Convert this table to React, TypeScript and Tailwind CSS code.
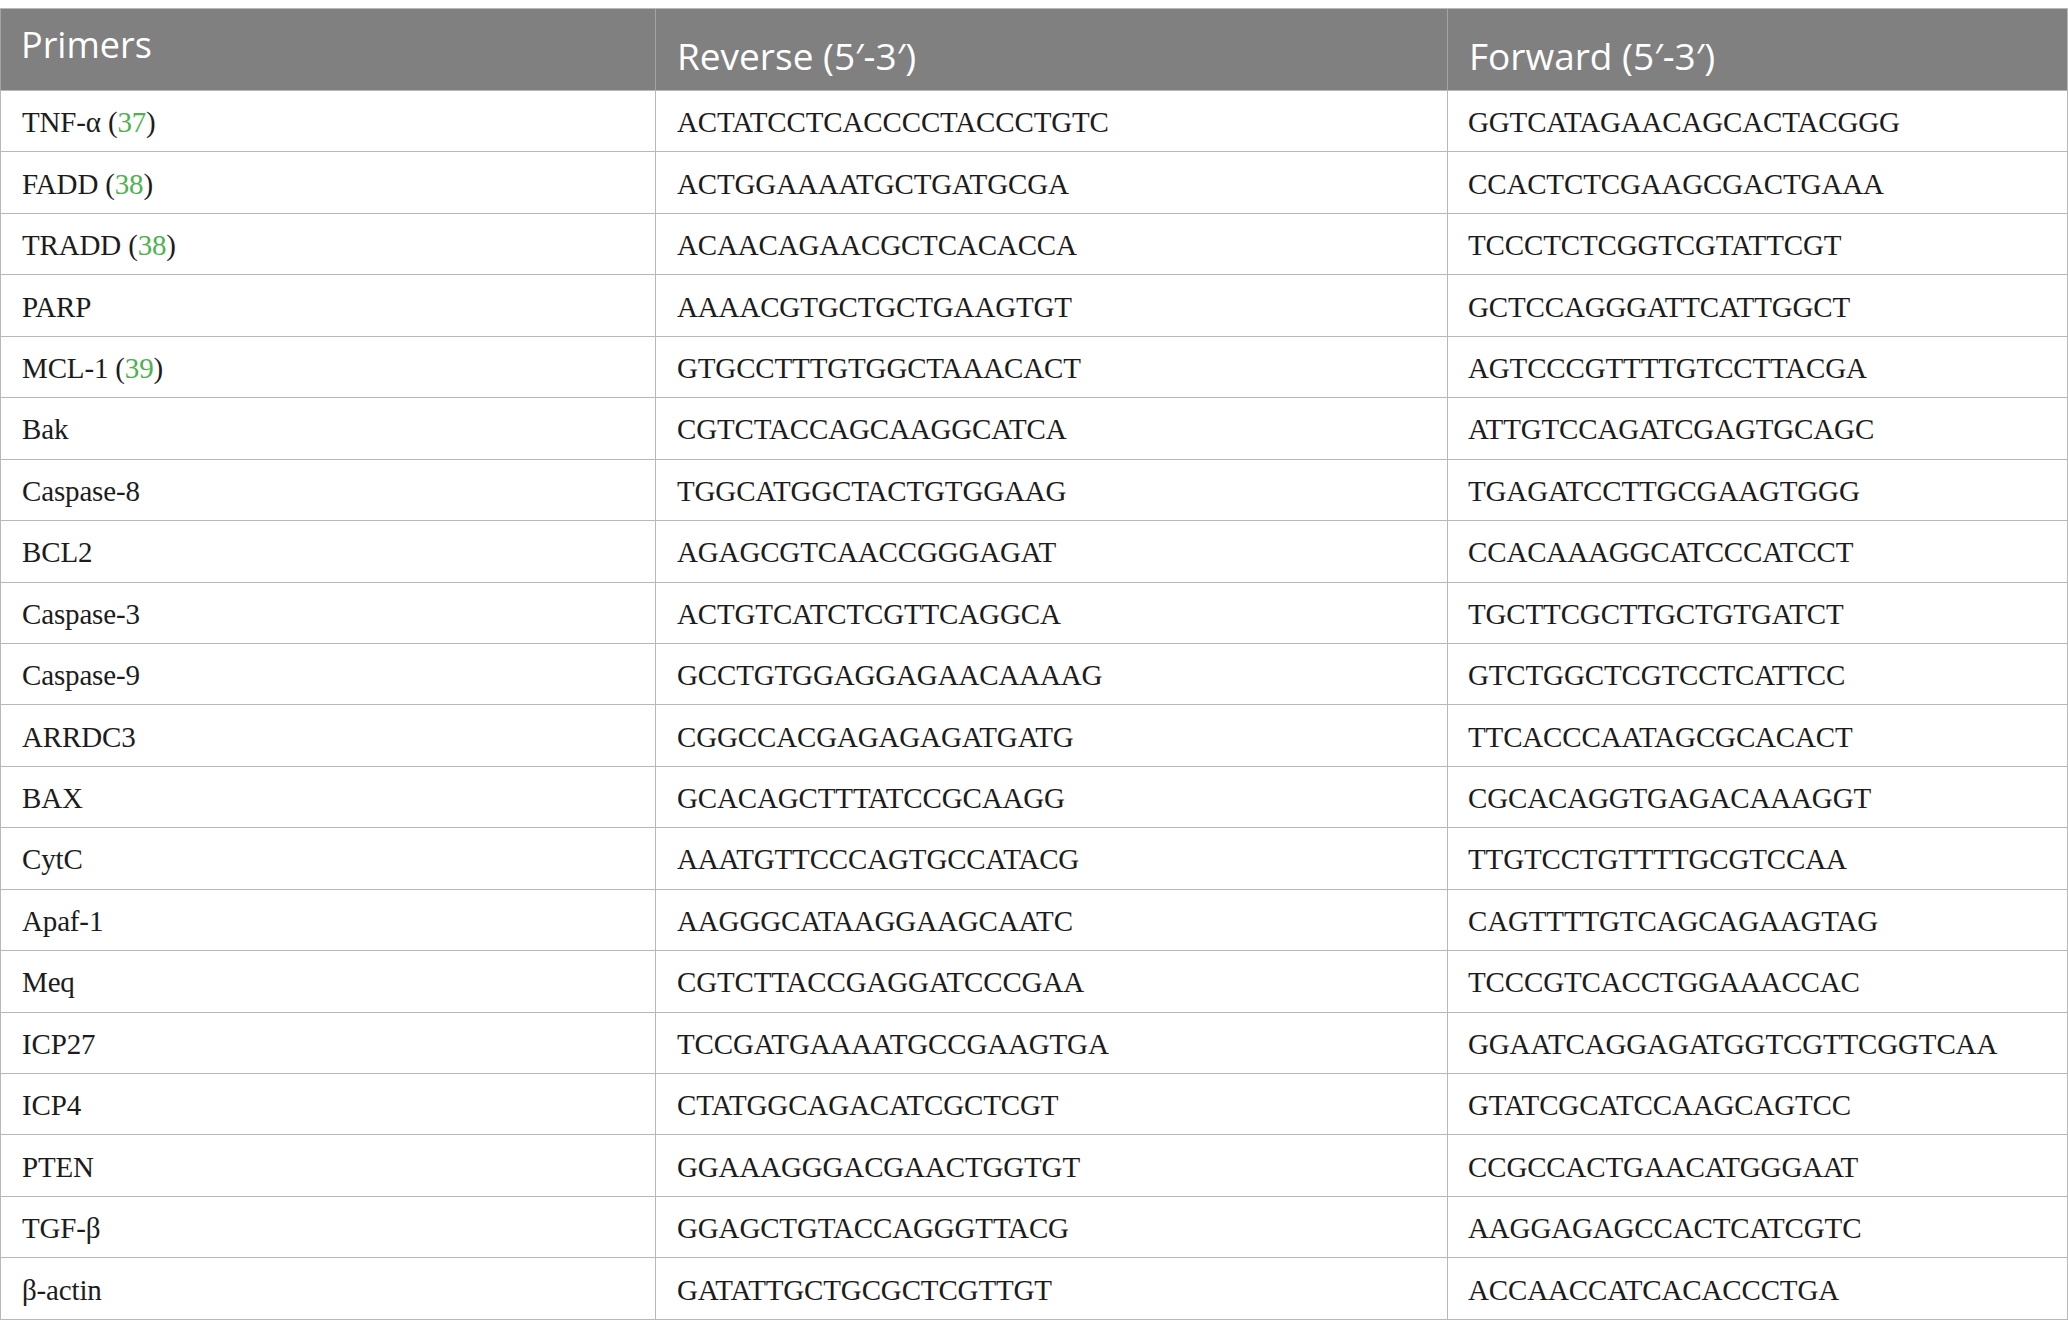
type Row = { gene: string; ref?: string; reverse: string; forward: string };

const rows: Row[] = [
  { gene: "TNF-α", ref: "37", reverse: "ACTATCCTCACCCCTACCCTGTC", forward: "GGTCATAGAACAGCACTACGGG" },
  { gene: "FADD", ref: "38", reverse: "ACTGGAAAATGCTGATGCGA", forward: "CCACTCTCGAAGCGACTGAAA" },
  { gene: "TRADD", ref: "38", reverse: "ACAACAGAACGCTCACACCA", forward: "TCCCTCTCGGTCGTATTCGT" },
  { gene: "PARP", reverse: "AAAACGTGCTGCTGAAGTGT", forward: "GCTCCAGGGATTCATTGGCT" },
  { gene: "MCL-1", ref: "39", reverse: "GTGCCTTTGTGGCTAAACACT", forward: "AGTCCCGTTTTGTCCTTACGA" },
  { gene: "Bak", reverse: "CGTCTACCAGCAAGGCATCA", forward: "ATTGTCCAGATCGAGTGCAGC" },
  { gene: "Caspase-8", reverse: "TGGCATGGCTACTGTGGAAG", forward: "TGAGATCCTTGCGAAGTGGG" },
  { gene: "BCL2", reverse: "AGAGCGTCAACCGGGAGAT", forward: "CCACAAAGGCATCCCATCCT" },
  { gene: "Caspase-3", reverse: "ACTGTCATCTCGTTCAGGCA", forward: "TGCTTCGCTTGCTGTGATCT" },
  { gene: "Caspase-9", reverse: "GCCTGTGGAGGAGAACAAAAG", forward: "GTCTGGCTCGTCCTCATTCC" },
  { gene: "ARRDC3", reverse: "CGGCCACGAGAGAGATGATG", forward: "TTCACCCAATAGCGCACACT" },
  { gene: "BAX", reverse: "GCACAGCTTTATCCGCAAGG", forward: "CGCACAGGTGAGACAAAGGT" },
  { gene: "CytC", reverse: "AAATGTTCCCAGTGCCATACG", forward: "TTGTCCTGTTTTGCGTCCAA" },
  { gene: "Apaf-1", reverse: "AAGGGCATAAGGAAGCAATC", forward: "CAGTTTTGTCAGCAGAAGTAG" },
  { gene: "Meq", reverse: "CGTCTTACCGAGGATCCCGAA", forward: "TCCCGTCACCTGGAAACCAC" },
  { gene: "ICP27", reverse: "TCCGATGAAAATGCCGAAGTGA", forward: "GGAATCAGGAGATGGTCGTTCGGTCAA" },
  { gene: "ICP4", reverse: "CTATGGCAGACATCGCTCGT", forward: "GTATCGCATCCAAGCAGTCC" },
  { gene: "PTEN", reverse: "GGAAAGGGACGAACTGGTGT", forward: "CCGCCACTGAACATGGGAAT" },
  { gene: "TGF-β", reverse: "GGAGCTGTACCAGGGTTACG", forward: "AAGGAGAGCCACTCATCGTC" },
  { gene: "β-actin", reverse: "GATATTGCTGCGCTCGTTGT", forward: "ACCAACCATCACACCCTGA" },
];

export default function App() {
  return (
    <div className="min-h-screen bg-white pt-[8px]">
      <div className="border-t border-r border-[#b8b8b8] font-['Liberation_Serif',serif] text-[29px] tracking-[-0.15px] text-[#1c1c1c]">
        {/* header */}
        <div className="grid h-[81px] grid-cols-[655px_792px_1fr] bg-[#808080] font-['Open_Sans',sans-serif] text-[37px] leading-[44px] tracking-normal text-white">
          <div className="border-l border-[#a4a4a4] pl-[20px] pt-[14px] text-[36px]">Primers</div>
          <div className="border-l border-[#a4a4a4] pl-[21px] pt-[25px]">Reverse (5′-3′)</div>
          <div className="border-l border-[#a4a4a4] pl-[21px] pt-[25px]">Forward (5′-3′)</div>
        </div>
        {rows.map((row) => (
          <div
            key={row.gene}
            className="grid h-[61.45px] grid-cols-[655px_792px_1fr] border-t border-[#b8b8b8] leading-none"
          >
            <div className="flex items-center border-l border-[#b8b8b8] pl-[21px] pt-[3px]">
              {row.gene}
              {row.ref && (
                <span className="ml-[7px]">
                  (<span className="text-[#4db24f]">{row.ref}</span>)
                </span>
              )}
            </div>
            <div className="flex items-center border-l border-[#b8b8b8] pl-[21px] pt-[3px]">{row.reverse}</div>
            <div className="flex items-center border-l border-[#b8b8b8] pl-[20px] pt-[3px]">{row.forward}</div>
          </div>
        ))}
        <div className="border-t border-[#b8b8b8]" />
      </div>
    </div>
  );
}
